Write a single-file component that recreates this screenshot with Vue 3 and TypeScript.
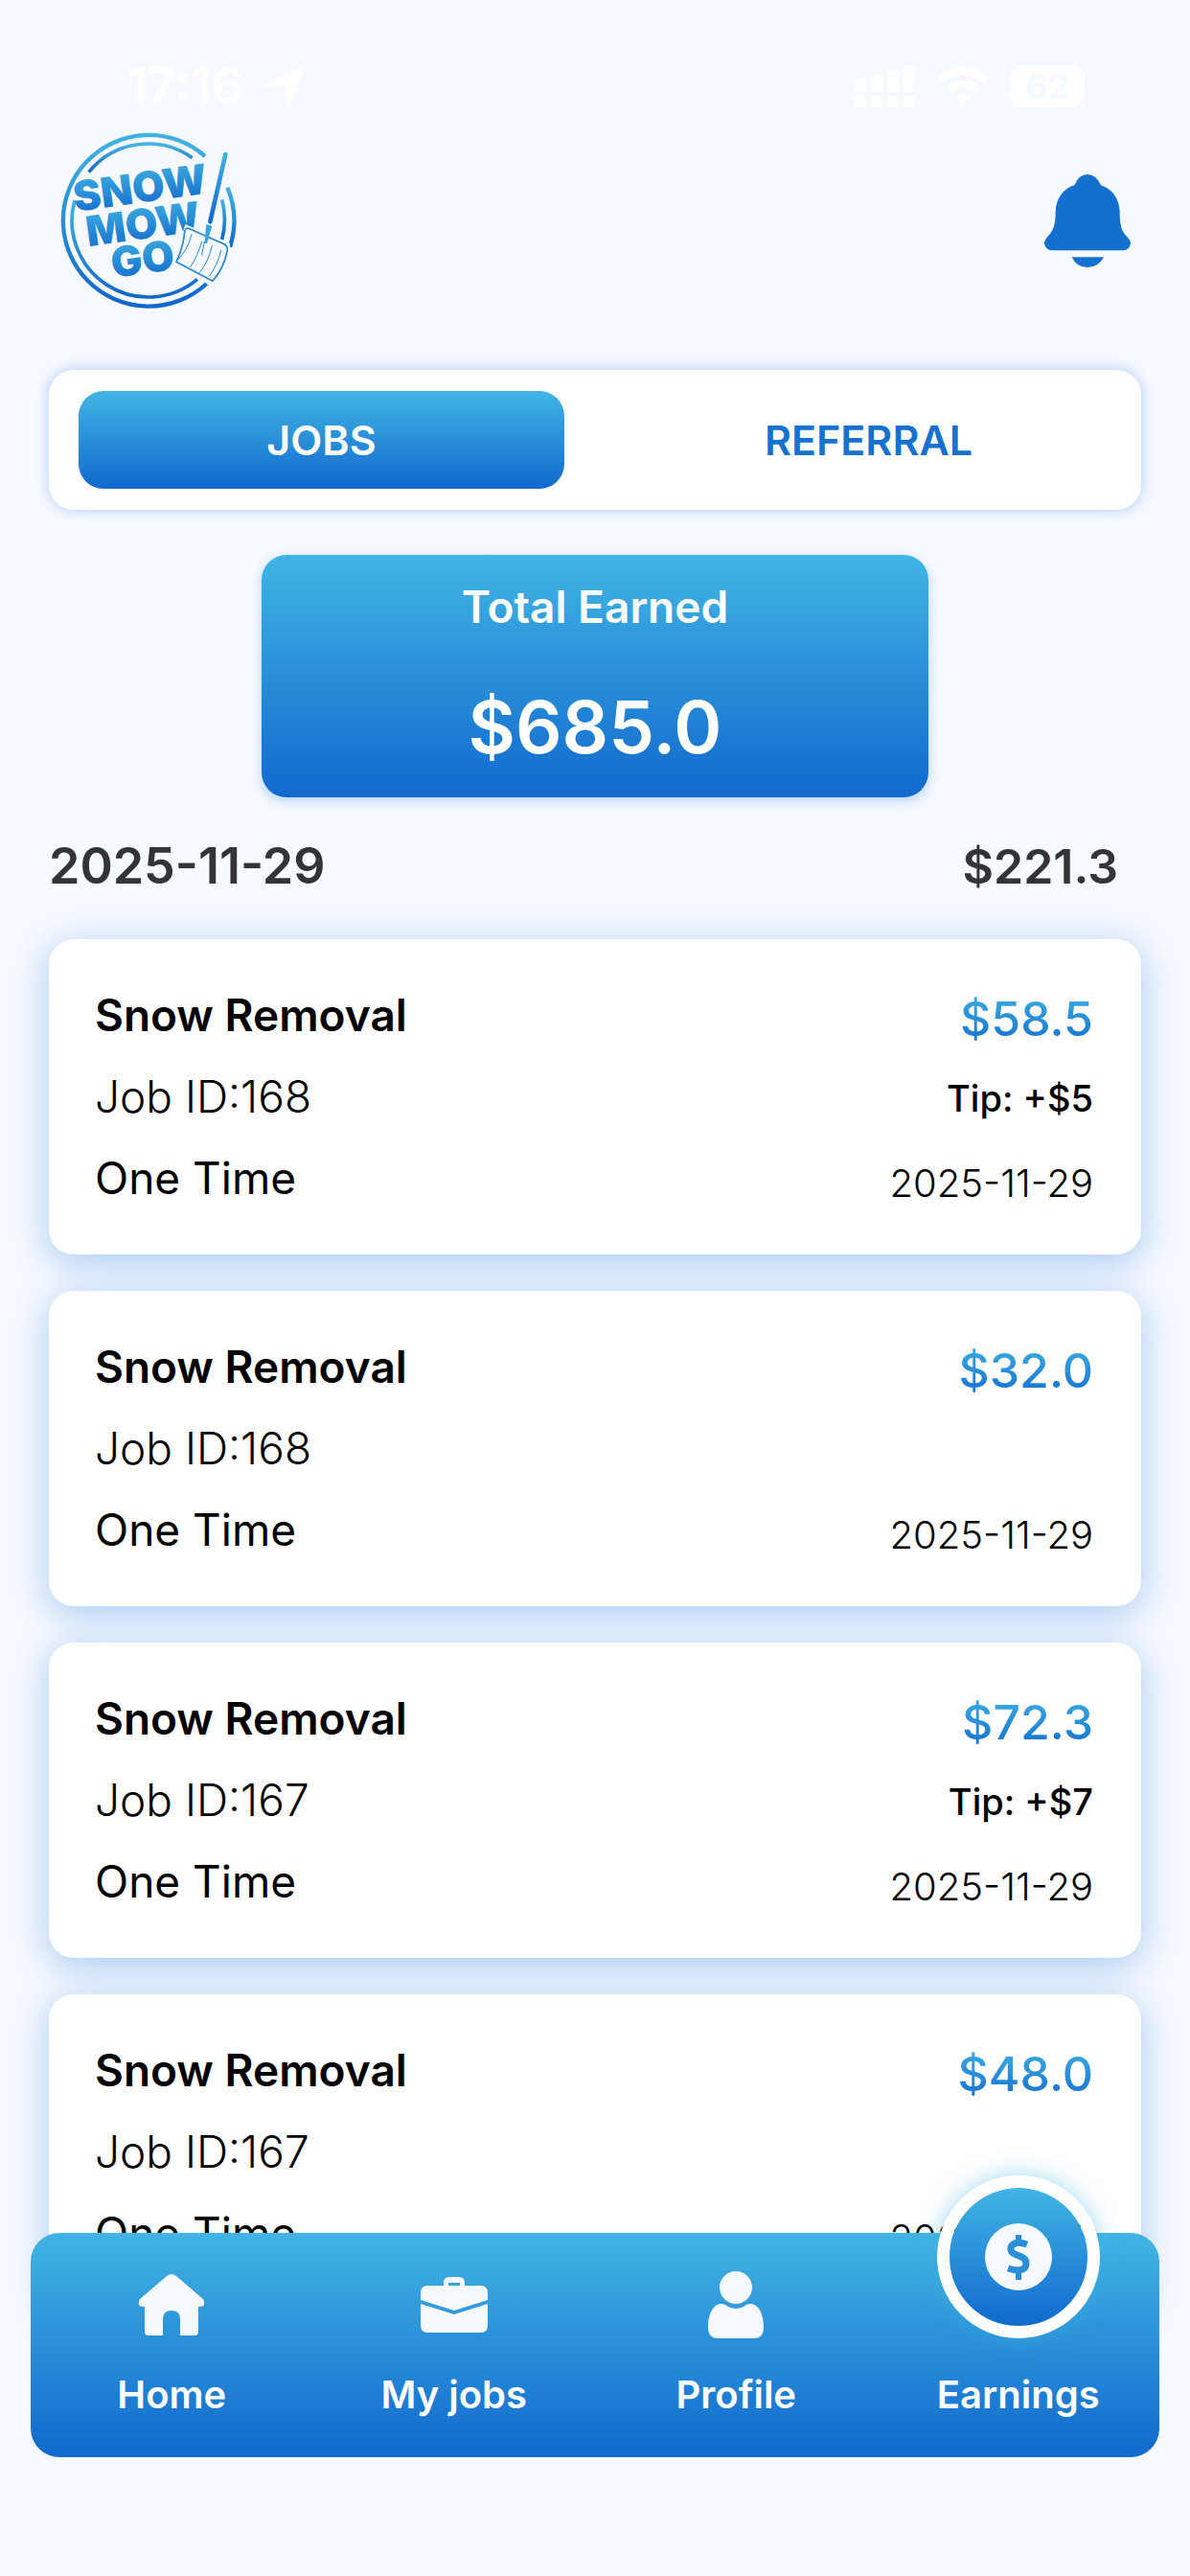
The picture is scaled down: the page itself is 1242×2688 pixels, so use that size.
<script setup lang="ts">
import { ref } from 'vue'

type TabKey = 'jobs' | 'referral'

interface Job {
  key: number
  title: string
  jobId: number
  frequency: string
  amount: string
  tip?: string
  date: string
}

const activeTab = ref<TabKey>('jobs')

const tabs: { key: TabKey; label: string }[] = [
  { key: 'jobs', label: 'JOBS' },
  { key: 'referral', label: 'REFERRAL' },
]

const jobs: Job[] = [
  { key: 1, title: 'Snow Removal', jobId: 168, frequency: 'One Time', amount: '$58.5', tip: '+$5', date: '2025-11-29' },
  { key: 2, title: 'Snow Removal', jobId: 168, frequency: 'One Time', amount: '$32.0', date: '2025-11-29' },
  { key: 3, title: 'Snow Removal', jobId: 167, frequency: 'One Time', amount: '$72.3', tip: '+$7', date: '2025-11-29' },
  { key: 4, title: 'Snow Removal', jobId: 167, frequency: 'One Time', amount: '$48.0', date: '2025-11-29' },
]
</script>

<template>
  <div class="page">
    <div class="status">
      <div class="status-group">
        <span class="clock">17:16</span>
        <svg width="42" height="42" viewBox="0 0 42 42" fill="currentColor" aria-hidden="true">
          <path d="M2 18 36 1q6-2 5 4L27 39q-3 5-5-1V24q0-2-2-2H4q-6-1-2-4z" />
        </svg>
      </div>
      <div class="status-group">
        <svg width="64" height="44" viewBox="0 0 64 44" fill="currentColor" aria-hidden="true">
          <rect x="0" y="14" width="12" height="14" rx="4" />
          <rect x="17" y="10" width="12" height="18" rx="4" />
          <rect x="34" y="5" width="12" height="23" rx="4" />
          <rect x="51" y="0" width="12" height="28" rx="4" />
          <rect x="0" y="32" width="12" height="12" rx="4" />
          <rect x="17" y="32" width="12" height="12" rx="4" />
          <rect x="34" y="32" width="12" height="12" rx="4" />
          <rect x="51" y="32" width="12" height="12" rx="4" />
        </svg>
        <svg width="54" height="40" viewBox="0 0 54 40" fill="none" stroke="currentColor" stroke-width="8" aria-hidden="true">
          <path d="M3 14Q27-6 51 14M12 24Q27 12 42 24" />
          <path d="M27 40l-8-9q8-6 16 0z" fill="currentColor" stroke="none" />
        </svg>
        <span class="battery">62</span>
      </div>
    </div>

    <header class="header">
      <svg class="logo" width="210" height="200" viewBox="3 0 630 600" role="img" aria-label="Snow Mow Go">
        <defs>
          <linearGradient id="brand" x1="0" y1="0" x2="0" y2="1">
            <stop offset="0" stop-color="#41b3e1" />
            <stop offset="1" stop-color="#1167cb" />
          </linearGradient>
        </defs>
        <g fill="none" stroke="url(#brand)">
          <path stroke-width="13" d="M497 498A268 268 0 1 1 492 99" />
          <path stroke-width="13" d="M562 197A268 268 0 0 1 570 383" />
          <path stroke-width="11" d="M468 484A239 239 0 0 1 84 237" />
          <path stroke-width="11" d="M128 149A239 239 0 0 1 452 104" />
          <path stroke-width="11" d="M545 235A239 239 0 0 1 545 360" />
          <path stroke-width="14" stroke-linecap="round" d="M556 93 508 304" />
        </g>
        <g class="logo-text" fill="url(#brand)">
          <text x="86" y="273" transform="rotate(-8 86 273)">SNOW</text>
          <text x="126" y="382" transform="rotate(-8 126 382)">MOW</text>
          <text x="204" y="480" transform="rotate(-8 204 480)">GO</text>
        </g>
        <path fill="#f6f9ff" d="M430 312 570 372 566 440 518 504 396 434z" />
        <g fill="none" stroke="#2586d3" stroke-width="5" stroke-linejoin="round" stroke-linecap="round">
          <path d="M440 325 552 374Q566 382 560 402 550 450 516 490L402 430Q424 384 428 336 430 322 440 325z" />
          <path stroke-width="3" d="M450 344Q438 392 408 422M482 366Q468 414 446 446M514 380Q502 430 476 462M542 394Q532 438 506 474M482 408l8-42" />
        </g>
        <path fill="#3aa3dc" d="M496 312 514 317 504 352 498 372 490 372 492 350z" />
      </svg>
      <button class="bell" type="button" aria-label="Notifications">
        <svg width="90" height="97" viewBox="0 0 270 291" fill="currentColor" aria-hidden="true">
          <path d="M94 34Q108 0 135 0T177 34C214 46 235 78 236 116 236 152 240 176 256 192 264 201 270 207 270 215Q268 236 246 238H24Q2 236 0 215C0 207 6 200 12 193 30 174 35 152 35 116 36 78 58 44 94 34z" />
          <path d="M86 259H186Q170 291 135 291T86 259z" />
        </svg>
      </button>
    </header>

    <main class="content">
      <div class="tabs" role="tablist">
        <button
          v-for="tab in tabs"
          :key="tab.key"
          type="button"
          role="tab"
          class="tab"
          :class="{ active: activeTab === tab.key }"
          :aria-selected="activeTab === tab.key"
          @click="activeTab = tab.key"
        >
          {{ tab.label }}
        </button>
      </div>

      <section class="total">
        <h1 class="total-label">Total Earned</h1>
        <p class="total-value">$685.0</p>
      </section>

      <div class="day">
        <h2 class="day-date">2025-11-29</h2>
        <strong class="day-sum">$221.3</strong>
      </div>

      <ul class="jobs">
        <li v-for="job in jobs" :key="job.key" class="job">
          <div class="job-info">
            <h3 class="job-title">{{ job.title }}</h3>
            <p class="job-id">Job ID:{{ job.jobId }}</p>
            <p class="job-frequency">{{ job.frequency }}</p>
          </div>
          <div class="job-pay">
            <p class="job-amount">{{ job.amount }}</p>
            <p v-if="job.tip" class="job-tip">Tip: {{ job.tip }}</p>
            <time class="job-date">{{ job.date }}</time>
          </div>
        </li>
      </ul>
    </main>

    <nav class="nav">
      <a href="#home" class="nav-item">
        <span class="nav-icon">
          <svg width="70" height="64" viewBox="0 0 70 64" fill="currentColor" aria-hidden="true">
            <path d="M30 2q5-4 10 0L68 26q4 8-4 8h-1v26q0 4-4 4H44V47q0-9-9-9t-9 9v17H11q-4 0-4-4V34H6q-8 0-4-8z" />
          </svg>
        </span>
        <span>Home</span>
      </a>
      <a href="#jobs" class="nav-item">
        <span class="nav-icon">
          <svg width="70" height="58" viewBox="0 0 70 58" fill="currentColor" aria-hidden="true">
            <path fill-rule="evenodd" d="M24 9V6q0-6 6-6h10q6 0 6 6v3h17q7 0 7 8v7L35 35 0 24v-7q0-8 7-8zm5 0h12V6H29z" />
            <path d="M0 28 35 39 70 28v22q0 8-7 8H7q-7 0-7-8z" />
          </svg>
        </span>
        <span>My jobs</span>
      </a>
      <a href="#profile" class="nav-item">
        <span class="nav-icon">
          <svg width="58" height="70" viewBox="0 0 58 70" fill="currentColor" aria-hidden="true">
            <circle cx="29" cy="17" r="17" />
            <path d="M14 34Q18 34 21 37 29 41 37 37 40 34 44 34C53 34 58 45 58 58Q58 70 48 70H10Q0 70 0 58C0 45 5 34 14 34z" />
          </svg>
        </span>
        <span>Profile</span>
      </a>
      <a href="#earnings" class="nav-item" aria-current="page">
        <span class="nav-icon">
          <span class="nav-bubble">
            <svg width="70" height="70" viewBox="0 0 70 70" aria-hidden="true">
              <circle cx="35" cy="35" r="35" fill="#f6f9ff" />
              <path d="M44 22Q36 19 31 21C25 24 26 30 31 32L38 35C45 38 44 46 39 48 34 50 30 49 24 47" fill="none" stroke="#2b8fd7" stroke-width="7" />
              <path d="M32 12h6v8h-6zM32 50h6v9h-6z" fill="#2b8fd7" />
            </svg>
          </span>
        </span>
        <span>Earnings</span>
      </a>
    </nav>
  </div>
</template>

<style>
body {
  background: #f6f9ff;
}
</style>

<style scoped>
.page {
  --brand: linear-gradient(180deg, #41b5e4 0%, #1169cd 100%);
  --blue: #1671cf;
  --surface: #f6f9ff;
  box-sizing: border-box;
  min-height: 100vh;
  padding-bottom: 278px;
  background: var(--surface);
  font-family: Inter, 'Liberation Sans', sans-serif;
  color: #000;
}

h1,
h2,
h3,
p,
ul {
  margin: 0;
  padding: 0;
}

button {
  border: 0;
  background: none;
  padding: 0;
  font: inherit;
  color: inherit;
}

svg {
  display: block;
}

.status {
  display: flex;
  align-items: center;
  justify-content: space-between;
  padding: 64px 110px 14px 132px;
  color: #fff;
}

.status-group {
  display: flex;
  align-items: center;
  gap: 22px;
}

.clock {
  font-size: 52px;
  line-height: 52px;
  font-weight: 600;
}

.battery {
  width: 78px;
  border-radius: 14px;
  background: #fff;
  color: var(--surface);
  font-size: 36px;
  line-height: 44px;
  font-weight: 700;
  text-align: center;
}

.header {
  display: flex;
  align-items: center;
  justify-content: space-between;
  padding: 0 62px 0 51px;
}

.logo-text {
  font-family: Inter, sans-serif;
  font-size: 130px;
  font-weight: 900;
}

.bell {
  color: #1370cf;
}

.content {
  padding: 56px 51px 0;
}

.tabs {
  display: flex;
  gap: 64px;
  padding: 22px 31px;
  border-radius: 26px;
  background: #fff;
  box-shadow: 0 0 14px rgba(70, 140, 255, 0.42);
}

.tab {
  flex: 1;
  border-radius: 26px;
  color: var(--blue);
  font-size: 43px;
  line-height: 102px;
  font-weight: 600;
}

.tab.active {
  background: var(--brand);
  color: #fff;
}

.total {
  width: 61%;
  margin: 47px auto 37px;
  padding: 24px 0;
  border-radius: 26px;
  background: var(--brand);
  box-shadow: 0 4px 12px rgba(30, 130, 220, 0.3);
  color: #fff;
  text-align: center;
}

.total-label {
  margin-bottom: 45px;
  font-size: 46px;
  line-height: 60px;
  font-weight: 600;
}

.total-value {
  font-size: 76px;
  line-height: 100px;
  font-weight: 600;
}

.day {
  display: flex;
  align-items: baseline;
  justify-content: space-between;
  padding-right: 24px;
  margin-bottom: 41px;
  color: #333436;
  line-height: 70px;
}

.day-date {
  font-size: 52px;
  font-weight: 600;
}

.day-sum {
  font-size: 50px;
  font-weight: 600;
}

.jobs {
  display: flex;
  flex-direction: column;
  gap: 38px;
  list-style: none;
}

.job {
  display: flex;
  justify-content: space-between;
  padding: 49px 50px 49px 48px;
  border-radius: 26px;
  background: #fff;
  box-shadow: 0 8px 38px rgba(25, 118, 215, 0.36);
}

.job-info,
.job-pay {
  display: flex;
  flex-direction: column;
  gap: 24px;
}

.job-info {
  font-size: 46px;
  line-height: 61px;
}

.job-title {
  font-size: inherit;
  font-weight: 600;
}

.job-id {
  font-weight: 300;
}

.job-frequency {
  font-weight: 400;
}

.job-pay {
  align-items: flex-end;
  font-size: 38px;
  line-height: 51px;
}

.job-amount {
  background: var(--brand);
  background-clip: text;
  -webkit-background-clip: text;
  color: transparent;
  font-size: 50px;
  line-height: 68px;
  font-weight: 500;
}

.job-tip {
  font-weight: 500;
}

.job-date {
  margin-top: auto;
  font-size: 40px;
  font-weight: 300;
}

.nav {
  position: fixed;
  right: 32px;
  bottom: 124px;
  left: 32px;
  display: flex;
  padding: 40px 0;
  border-radius: 30px;
  background: var(--brand);
}

.nav-item {
  flex: 1;
  display: flex;
  flex-direction: column;
  align-items: center;
  gap: 34px;
  color: #fff;
  font-size: 40px;
  line-height: 50px;
  font-weight: 600;
  text-decoration: none;
}

.nav-icon {
  position: relative;
  display: flex;
  align-items: center;
  justify-content: center;
  width: 170px;
  height: 70px;
  color: var(--surface);
}

.nav-bubble {
  position: absolute;
  bottom: 0;
  left: 0;
  box-sizing: border-box;
  display: flex;
  align-items: center;
  justify-content: center;
  width: 170px;
  height: 170px;
  border: 13px solid #fff;
  border-radius: 50%;
  background: var(--brand) padding-box;
  box-shadow: 0 0 24px rgba(64, 180, 225, 0.5);
}
</style>
